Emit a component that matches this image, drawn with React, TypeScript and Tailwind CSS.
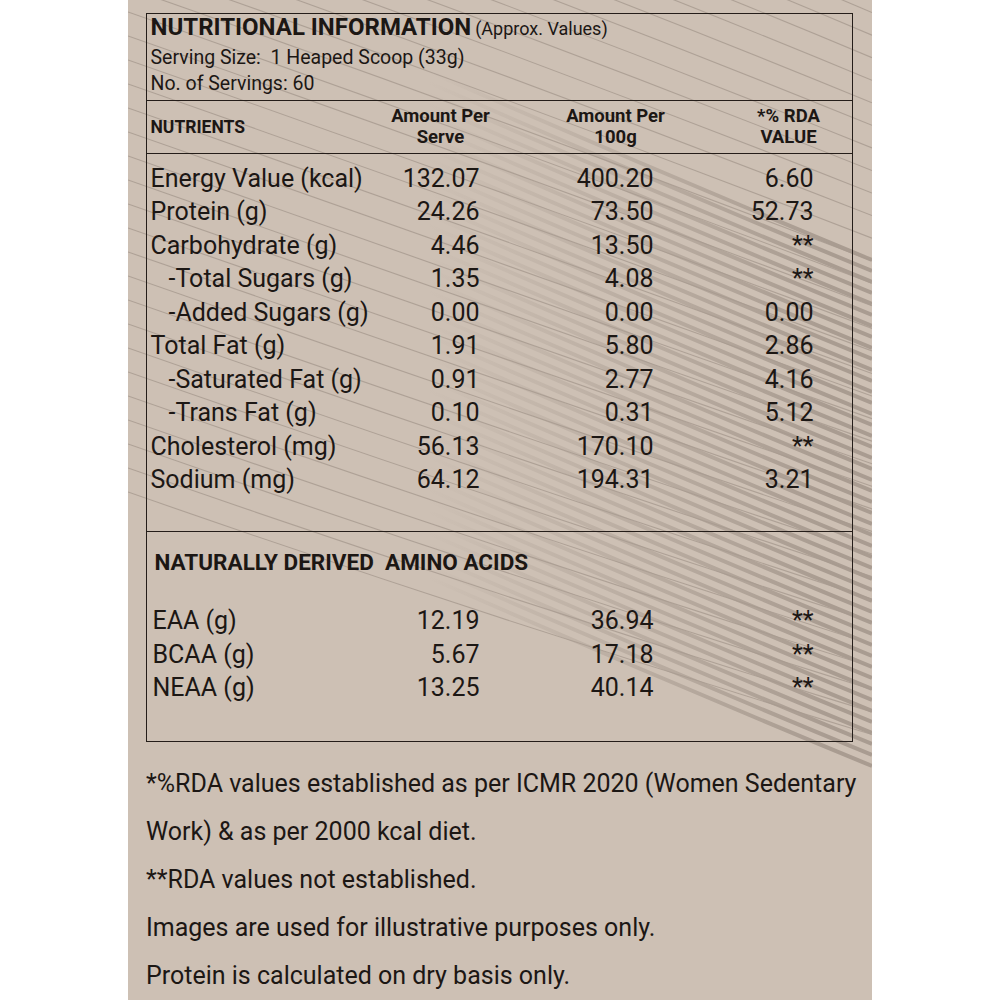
import React from 'react';

type Row = { label: string; serve: string; per100: string; rda: string; sub?: boolean };

const nutrients: Row[] = [
  { label: 'Energy Value (kcal)', serve: '132.07', per100: '400.20', rda: '6.60' },
  { label: 'Protein (g)', serve: '24.26', per100: '73.50', rda: '52.73' },
  { label: 'Carbohydrate (g)', serve: '4.46', per100: '13.50', rda: '**' },
  { label: '-Total Sugars (g)', serve: '1.35', per100: '4.08', rda: '**', sub: true },
  { label: '-Added Sugars (g)', serve: '0.00', per100: '0.00', rda: '0.00', sub: true },
  { label: 'Total Fat (g)', serve: '1.91', per100: '5.80', rda: '2.86' },
  { label: '-Saturated Fat (g)', serve: '0.91', per100: '2.77', rda: '4.16', sub: true },
  { label: '-Trans Fat (g)', serve: '0.10', per100: '0.31', rda: '5.12', sub: true },
  { label: 'Cholesterol (mg)', serve: '56.13', per100: '170.10', rda: '**' },
  { label: 'Sodium (mg)', serve: '64.12', per100: '194.31', rda: '3.21' },
];

const aminos: Row[] = [
  { label: 'EAA (g)', serve: '12.19', per100: '36.94', rda: '**' },
  { label: 'BCAA (g)', serve: '5.67', per100: '17.18', rda: '**' },
  { label: 'NEAA (g)', serve: '13.25', per100: '40.14', rda: '**' },
];

const notes = [
  '*%RDA values established as per ICMR 2020 (Women Sedentary',
  'Work) & as per 2000 kcal diet.',
  '**RDA values not established.',
  'Images are used for illustrative purposes only.',
  'Protein is calculated on dry basis only.',
];

// background stripes, drawn in panel coordinates (744 x 1000)
const Stripes = () => {
  const thin: number[] = [];
  for (let y = -300; y <= 500; y += 24) thin.push(y);
  const bands: number[] = [];
  for (let y = 260; y <= 775; y += 11) bands.push(y);

  return (
    <svg className="absolute inset-0" width="744" height="1000" viewBox="0 0 744 1000">
      <defs>
        <linearGradient id="fade" gradientUnits="userSpaceOnUse" x1="300" y1="0" x2="700" y2="0">
          <stop offset="0" stopColor="#a79a8f" stopOpacity="0" />
          <stop offset="1" stopColor="#a79a8f" stopOpacity="0.95" />
        </linearGradient>
      </defs>
      {thin.map((y) => (
        <path
          key={`t${y}`}
          d={`M0 ${y} Q372 ${y + 130} 744 ${y + 290 - (y + 300) * 0.06}`}
          fill="none"
          stroke="#9a8c82"
          strokeOpacity="0.6"
          strokeWidth="1.1"
        />
      ))}
      {bands.map((y) => (
        <path
          key={`b${y}`}
          d={`M240 ${y - 215} Q490 ${y - 105} 744 ${y}`}
          fill="none"
          stroke="url(#fade)"
          strokeWidth="4"
        />
      ))}
    </svg>
  );
};

const cols = 'grid grid-cols-[254.5px_78px_174px_160px]';

const DataRow = ({ row, pad }: { row: Row; pad: string }) => (
  <div className={`${cols} h-[33.5px] items-center text-[25px] leading-[33.5px]`}>
    <div className={`whitespace-nowrap ${row.sub ? 'pl-[21.5px]' : pad}`}>{row.label}</div>
    <div className="text-right">{row.serve}</div>
    <div className="text-right">{row.per100}</div>
    <div className="text-right">{row.rda}</div>
  </div>
);

export default function App() {
  return (
    <div className="w-[1000px] h-[1000px] bg-white font-['Roboto',sans-serif] text-[#1c1714]">
      <div className="relative mx-auto w-[744px] h-[1000px] overflow-hidden bg-[#cdc0b4]">
        <Stripes />

        <div className="relative pt-[13px] pl-[18px]">
          <div className="w-[707px] border-[1.5px] border-[#241d19]">
            {/* title block */}
            <div className="h-[87px] border-b-[1.5px] border-[#241d19] pl-[3.5px]">
              <div className="h-[26px] leading-[26px] whitespace-nowrap">
                <span className="text-[24px] font-bold">NUTRITIONAL INFORMATION</span>{' '}
                <span className="text-[18px]">(Approx. Values)</span>
              </div>
              <div className="mt-[4.7px] text-[19.5px] leading-[26px] whitespace-pre">Serving Size:  1 Heaped Scoop (33g)</div>
              <div className="text-[19.5px] leading-[26px]">No. of Servings: 60</div>
            </div>

            {/* column headings */}
            <div className={`${cols} h-[53px] items-center border-b-[1.5px] border-[#241d19] font-bold`}>
              <div className="pl-[3.5px] text-[17.5px]">NUTRIENTS</div>
              <div className="flex justify-center">
                <div className="whitespace-nowrap text-center text-[18.5px] leading-[21px]">Amount Per<br />Serve</div>
              </div>
              <div className="flex justify-center pl-[98px]">
                <div className="whitespace-nowrap text-center text-[18.5px] leading-[21px]">Amount Per<br />100g</div>
              </div>
              <div className="flex justify-center pl-[110px]">
                <div className="whitespace-nowrap text-center text-[18.5px] leading-[21px]">*% RDA<br />VALUE</div>
              </div>
            </div>

            {/* nutrients */}
            <div className="h-[378px] pt-[7.5px] border-b-[1.5px] border-[#241d19]">
              {nutrients.map((r) => (
                <DataRow key={r.label} row={r} pad="pl-[3.5px]" />
              ))}
            </div>

            {/* amino acids */}
            <div className="h-[209px] pt-[17.3px]">
              <div className="pl-[7.5px] text-[22.5px] font-bold leading-[26px] whitespace-pre">NATURALLY DERIVED  AMINO ACIDS</div>
              <div className="mt-[29.2px]">
                {aminos.map((r) => (
                  <DataRow key={r.label} row={r} pad="pl-[5.5px]" />
                ))}
              </div>
            </div>
          </div>

          {/* footnotes */}
          <div className="mt-[17.8px] text-[25px] leading-[48px]">
            {notes.map((n) => (
              <div key={n} className="whitespace-nowrap">{n}</div>
            ))}
          </div>
        </div>
      </div>
    </div>
  );
}
